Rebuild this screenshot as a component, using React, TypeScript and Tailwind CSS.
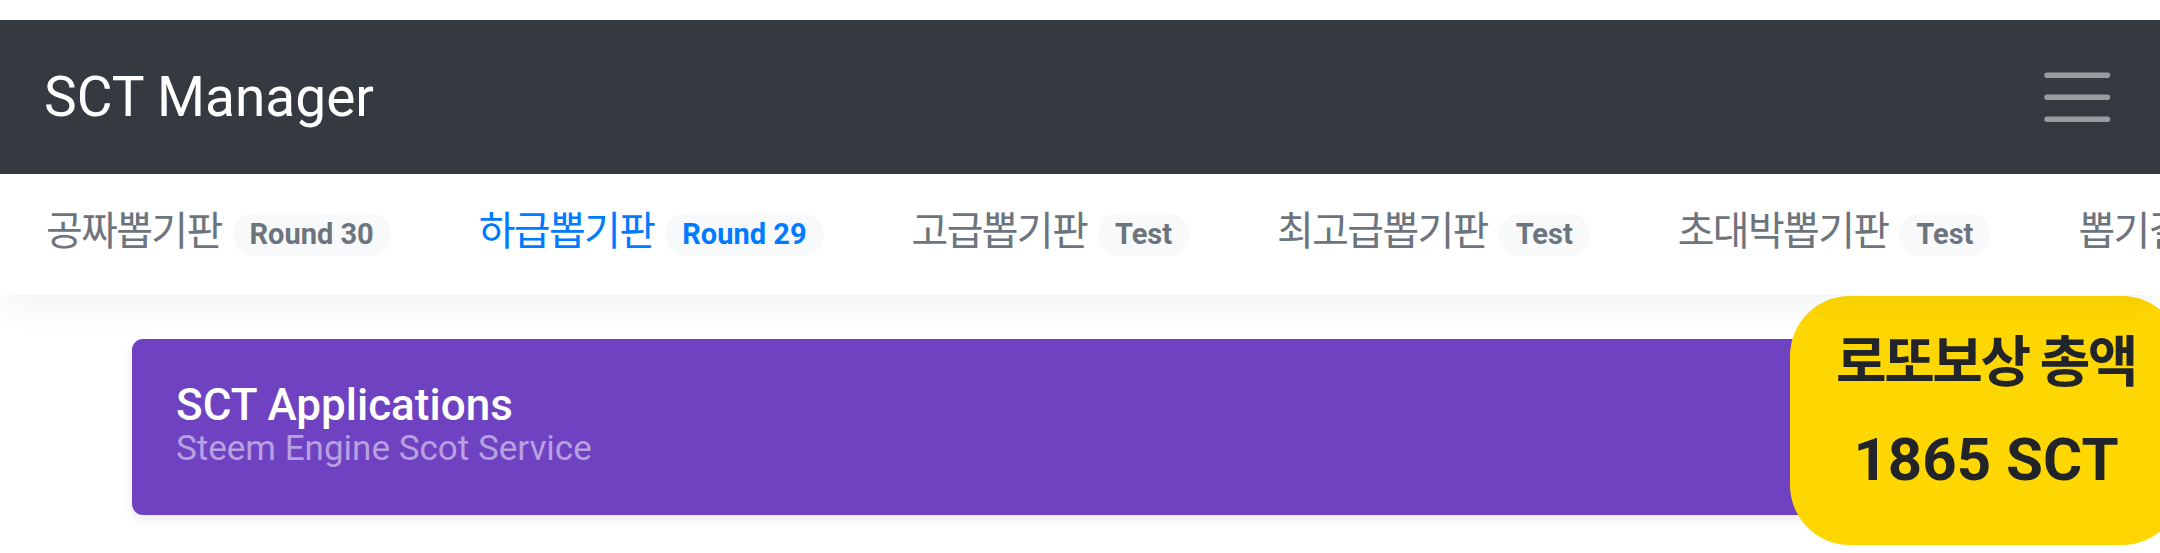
import React from 'react';

interface NavItem {
  label: string;
  badge: string;
  active?: boolean;
}

const navItems: NavItem[] = [
  { label: '공짜뽑기판', badge: 'Round 30' },
  { label: '하급뽑기판', badge: 'Round 29', active: true },
  { label: '고급뽑기판', badge: 'Test' },
  { label: '최고급뽑기판', badge: 'Test' },
  { label: '초대박뽑기판', badge: 'Test' },
  { label: '뽑기결과', badge: 'Test' },
];

function Navbar() {
  return (
    <nav className="flex h-[154px] items-center justify-between bg-[#343a40] pl-[44px] pr-[42px]">
      <span className="text-[55px] leading-none text-white">SCT Manager</span>
      <svg className="h-[82.5px] w-[82.5px]" viewBox="0 0 30 30" fill="none">
        <path
          d="M4 7h22M4 15h22M4 23h22"
          stroke="rgba(255,255,255,0.5)"
          strokeWidth="2"
          strokeLinecap="round"
        />
      </svg>
    </nav>
  );
}

function NavScroller() {
  return (
    <div className="relative z-10 h-[121px] overflow-hidden bg-white shadow-[0_11px_33px_rgba(0,0,0,0.05)]">
      <div className="flex h-full items-center pl-[2px]">
        {navItems.map((item) => (
          <a
            key={item.label}
            className={`flex shrink-0 items-center whitespace-nowrap px-[44px] ${
              item.active ? 'text-[#007bff]' : 'text-[#6c757d]'
            }`}
          >
            <span className="pb-[6px] text-[40px] leading-none tracking-[-1.7px]">{item.label}</span>
            <span className="ml-[11px] rounded-full bg-[#f8f9fa] px-[17px] py-[7px] text-[29px] font-bold leading-none">
              {item.badge}
            </span>
          </a>
        ))}
      </div>
    </div>
  );
}

function AppCard() {
  return (
    <div className="mx-[132px] mt-[44px] rounded-[11px] bg-[#6f42c1] px-[44px] py-[44px] shadow-[0_5px_11px_rgba(0,0,0,0.075)]">
      <h6 className="text-[44px] font-medium leading-[44px] text-white">SCT Applications</h6>
      <small className="block text-[35px] leading-[44px] text-[#b7a0e0]">Steem Engine Scot Service</small>
    </div>
  );
}

function RewardBadge() {
  return (
    <div className="absolute left-[1790px] top-[296px] flex h-[249px] w-[392px] flex-col items-center rounded-[60px] bg-[#ffd700] pt-[30px] font-bold text-[#212529]">
      <div className="text-[55px] leading-[72px] tracking-[-2.5px]">로또보상 총액</div>
      <div className="mt-[22px] text-[60px] leading-[80px]">1865 SCT</div>
    </div>
  );
}

export default function App() {
  return (
    <div className="relative h-[553px] w-full overflow-hidden bg-white font-['Roboto','Noto_Sans_CJK_KR',sans-serif]">
      <div className="h-[20px] bg-white" />
      <Navbar />
      <NavScroller />
      <main>
        <AppCard />
      </main>
      <RewardBadge />
    </div>
  );
}
